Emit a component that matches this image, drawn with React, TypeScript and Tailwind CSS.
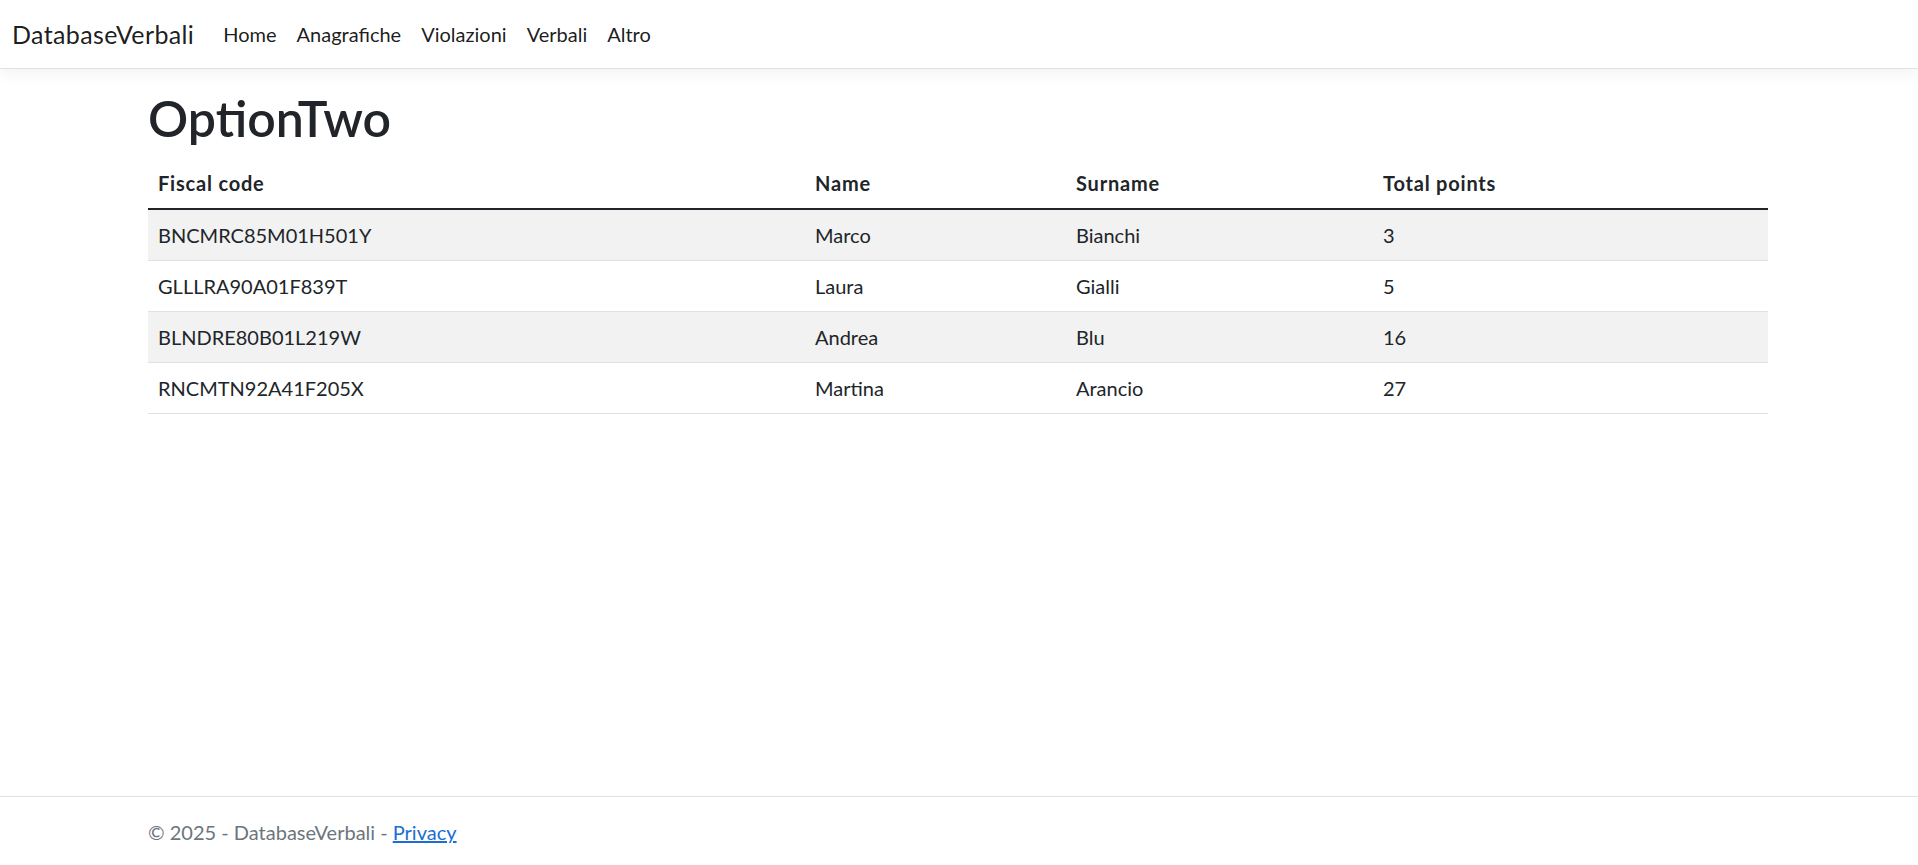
const people = [
  { code: "BNCMRC85M01H501Y", name: "Marco", surname: "Bianchi", points: 3 },
  { code: "GLLLRA90A01F839T", name: "Laura", surname: "Gialli", points: 5 },
  { code: "BLNDRE80B01L219W", name: "Andrea", surname: "Blu", points: 16 },
  { code: "RNCMTN92A41F205X", name: "Martina", surname: "Arancio", points: 27 },
];

const navLinks = ["Home", "Anagrafiche", "Violazioni", "Verbali", "Altro"];

export default function App() {
  return (
    <div
      className="min-h-[871px] flex flex-col bg-white text-[#212529] text-[20px] leading-[1.5]"
      style={{ fontFamily: '"Segoe UI", Lato, "Noto Sans", sans-serif' }}
    >
      <header className="h-[69px] border-b border-[#dee2e6] shadow-[0_5px_15px_rgba(0,0,0,0.05)] bg-white flex items-center px-[12px]">
        <a className="text-[25px] tracking-[0.015em] text-black/90 mr-[19px] leading-none">DatabaseVerbali</a>
        <nav className="flex">
          {navLinks.map((l) => (
            <a key={l} className="px-[10px] text-black/90">
              {l}
            </a>
          ))}
        </nav>
      </header>

      <main className="flex-1 pl-[148px] pr-[150px] pt-[19px]">
        <h1 className="text-[50px] font-semibold leading-[1.2] mb-[10px]">OptionTwo</h1>
        <table className="w-full border-collapse text-left">
          <thead>
            <tr className="border-b-2 border-[#212529]">
              <th className="w-[657px] px-[10px] py-[10px] font-bold tracking-[0.04em]">Fiscal code</th>
              <th className="w-[261px] px-[10px] py-[10px] font-bold tracking-[0.04em]">Name</th>
              <th className="w-[307px] px-[10px] py-[10px] font-bold tracking-[0.04em]">Surname</th>
              <th className="px-[10px] py-[10px] font-bold tracking-[0.04em]">Total points</th>
            </tr>
          </thead>
          <tbody>
            {people.map((p, i) => (
              <tr
                key={p.code}
                className={`border-b border-[#dee2e6] ${i % 2 === 0 ? "bg-[#f2f2f2]" : "bg-white"}`}
              >
                <td className="px-[10px] py-[10px]">{p.code}</td>
                <td className="px-[10px] py-[10px]">{p.name}</td>
                <td className="px-[10px] py-[10px]">{p.surname}</td>
                <td className="px-[10px] py-[10px]">{p.points}</td>
              </tr>
            ))}
          </tbody>
        </table>
      </main>

      <footer className="h-[75px] border-t border-[#dee2e6] px-[148px] leading-[70px] text-[#6c757d] whitespace-nowrap">
        © 2025 - DatabaseVerbali -{" "}
        <a className="text-[#1a6ed4] underline">Privacy</a>
      </footer>
    </div>
  );
}
